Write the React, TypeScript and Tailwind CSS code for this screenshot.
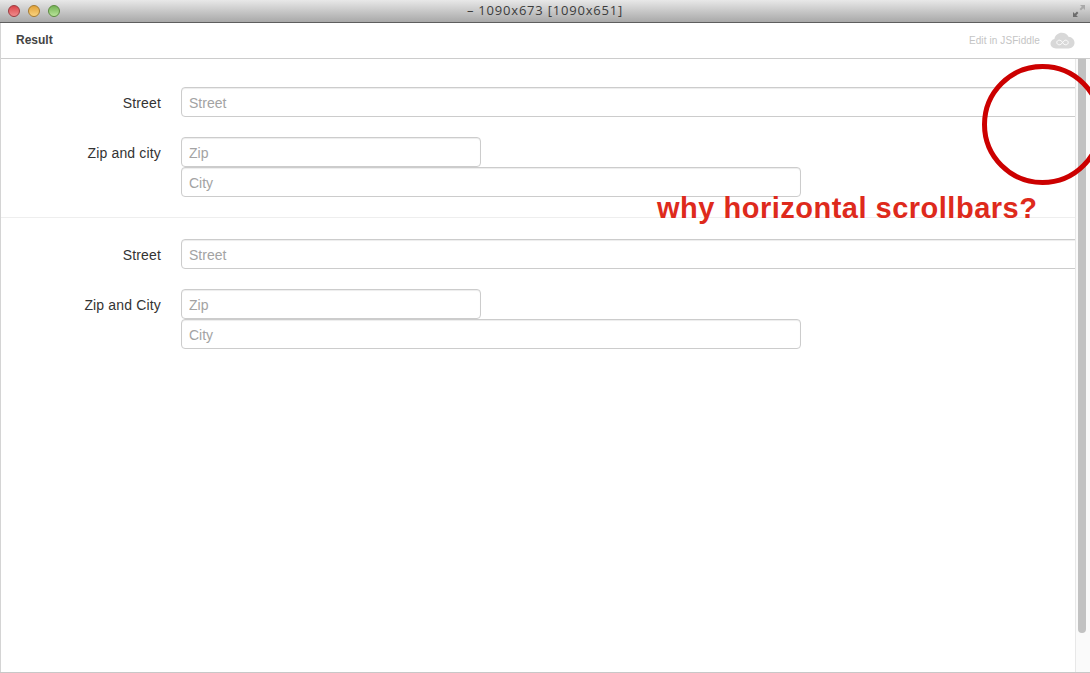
import React from "react";

const sans = { fontFamily: '"Liberation Sans", Arial, sans-serif' };

function Field({ placeholder, width }: { placeholder: string; width: string }) {
  return (
    <input
      readOnly
      placeholder={placeholder}
      className={`${width} h-[30px] shrink-0 rounded-[4px] border border-[#cccccc] bg-white px-[7px] pt-[2px] text-[14px] text-[#555555] placeholder:text-[#a3a3a3] shadow-[inset_0_1px_1px_rgba(0,0,0,0.075)] outline-none`}
    />
  );
}

function Row({ label, children }: { label: string; children: React.ReactNode }) {
  return (
    <div className="flex items-start">
      <label className="w-[160px] shrink-0 pt-[6px] text-right text-[14px] leading-[20px] tracking-[0.16px] text-[#333333]">{label}</label>
      <div className="ml-[20px] flex min-w-0 flex-col">{children}</div>
    </div>
  );
}

function Group({ cityLabel }: { cityLabel: string }) {
  return (
    <div className="flex flex-col gap-[20px]">
      <Row label="Street">
        <Field placeholder="Street" width="w-[920px]" />
      </Row>
      <Row label={cityLabel}>
        <Field placeholder="Zip" width="w-[300px]" />
        <Field placeholder="City" width="w-[620px]" />
      </Row>
    </div>
  );
}

export default function App() {
  return (
    <div style={sans} className="relative flex h-[673px] w-[1090px] flex-col overflow-hidden bg-white">
      <div className="flex h-[23px] shrink-0 items-center justify-between border-b border-[#5e5e5e] bg-gradient-to-b from-[#e8e8e8] to-[#a9a9a9] pl-[8px] pr-[4px]">
        <div className="flex gap-[8px]">
          <span className="h-[12px] w-[12px] rounded-full border border-[#9c3a3e] bg-gradient-to-b from-[#d9434a] to-[#f08a8c]" />
          <span className="h-[12px] w-[12px] rounded-full border border-[#a67a2e] bg-gradient-to-b from-[#e2a236] to-[#f9d37e]" />
          <span className="h-[12px] w-[12px] rounded-full border border-[#5b8a3e] bg-gradient-to-b from-[#74b354] to-[#b9e49a]" />
        </div>
        <span className="absolute left-0 right-0 text-center text-[13px] tracking-[0.8px] text-[#3c3c3c]" style={{ fontFamily: '"Open Sans", "Noto Sans", sans-serif' }}>
          – 1090x673 [1090x651]
        </span>
        <svg width="14" height="14" viewBox="0 0 14 14" className="relative">
          <path d="M8 1h5v5l-1.800-1.800L9 6.400 7.600 5l2.200-2.200z" fill="#a9a9a9" />
          <path d="M1 8v5h5l-1.800-1.800L6.400 9 5 7.600 2.800 9.800z" fill="#6c6c6c" />
        </svg>
      </div>

      <div className="flex min-h-0 flex-1 flex-col border-l border-[#d4d4d4]">
        <div className="flex h-[36px] shrink-0 items-center justify-between border-b border-[#cccccc] bg-white pb-[2px] pl-[15px] pr-[15px]">
          <span className="text-[12px] font-bold text-[#444444]">Result</span>
          <div className="flex items-center gap-[10px] pt-[2px]">
            <span className="text-[10px] tracking-[0.1px] text-[#c4c4c4]">Edit in JSFiddle</span>
            <svg width="25" height="17" viewBox="0 0 25 17">
              <path d="M6 16.500C2.700 16.500.5 14.400.5 11.600c0-2.400 1.600-4.200 3.900-4.700C5.200 3.200 8.200.8 11.800.8c3 0 5.500 1.600 6.700 4 3.500.2 6 2.800 6 6 0 3.300-2.600 5.700-6 5.700z" fill="#d8d8d8" />
              <path d="M12.500 10.200c-1-1.300-2-2-3.200-2-1.400 0-2.500 1-2.500 2.300s1.100 2.300 2.500 2.300c1.200 0 2.200-.8 3.200-2.100 1-1.300 2-2.500 3.200-2.500 1.400 0 2.500 1 2.500 2.300s-1.100 2.300-2.500 2.300c-1.200 0-2.200-.8-3.200-2.100z" fill="none" stroke="#ffffff" strokeWidth="1" />
            </svg>
          </div>
        </div>

        <div className="flex min-h-0 flex-1">
          <div className="min-w-0 flex-1 overflow-hidden pt-[28px]">
            <Group cityLabel="Zip and city" />
            <div className="mb-[21px] mt-[20px] h-px bg-[#eeeeee]" />
            <Group cityLabel="Zip and City" />
          </div>
          <div className="w-[15px] shrink-0 border-l border-[#e8e8e8] bg-[#fafafa] pl-[2px] pr-[4px]">
            <div className="h-[574px] rounded-b-[4px] bg-[#c2c2c2]" />
          </div>
        </div>
      </div>
      <div className="h-px shrink-0 bg-[#c8c8c8]" />

      <div className="absolute left-[982px] top-[64px] h-[121px] w-[121px] rounded-full border-[5px] border-[#cc0000]" />
      <div className="absolute left-[657px] top-[191px] whitespace-nowrap text-[29px] font-bold leading-[34px] tracking-[0.5px] text-[#de2a1c]">
        why horizontal scrollbars?
      </div>
    </div>
  );
}
